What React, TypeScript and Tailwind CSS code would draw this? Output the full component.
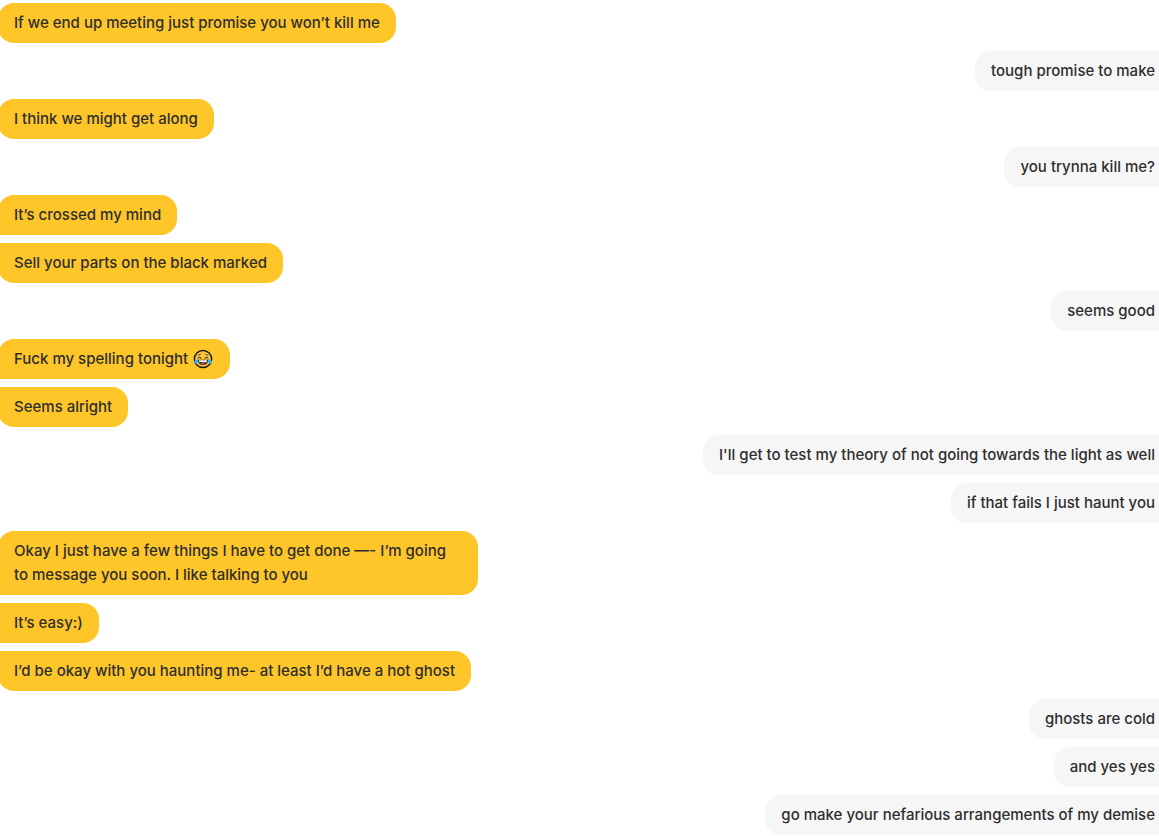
import clsx from 'clsx';

type Message = {
  text: string;
  mine?: boolean;
  emoji?: boolean;
};

const messages: Message[] = [
  { text: 'If we end up meeting just promise you won’t kill me' },
  { text: 'tough promise to make', mine: true },
  { text: 'I think we might get along' },
  { text: 'you trynna kill me?', mine: true },
  { text: 'It’s crossed my mind' },
  { text: 'Sell your parts on the black marked' },
  { text: 'seems good', mine: true },
  { text: 'Fuck my spelling tonight ', emoji: true },
  { text: 'Seems alright' },
  { text: "I'll get to test my theory of not going towards the light as well", mine: true },
  { text: 'if that fails I just haunt you', mine: true },
  { text: 'Okay I just have a few things I have to get done —- I’m going to message you soon. I like talking to you' },
  { text: 'It’s easy:)' },
  { text: 'I’d be okay with you haunting me- at least I’d have a hot ghost' },
  { text: 'ghosts are cold', mine: true },
  { text: 'and yes yes', mine: true },
  { text: 'go make your nefarious arrangements of my demise', mine: true },
];

function JoyEmoji() {
  return (
    <svg aria-label="😂" className="mx-px inline-block size-5 align-[-5px]" role="img" viewBox="0 0 20 20">
      <circle cx="10" cy="10" fill="#ffc83d" r="8.6" stroke="#1a1a1a" strokeWidth="1.5" />
      <path d="M5 6.4 7.6 5.2M15 6.4 12.4 5.2" fill="none" stroke="#1a1a1a" strokeLinecap="round" strokeWidth="0.7" />
      <path d="M4.8 9q1.6-1.7 3.4 0M11.8 9q1.8-1.7 3.4 0" fill="none" stroke="#1a1a1a" strokeLinecap="round" />
      <path d="M4.8 10.8h10.4q-.5 5.4-5.2 5.4t-5.2-5.4z" fill="#1a1a1a" />
      <path d="M5.8 11.2h8.4l-.5 2H6.3z" fill="#fff" />
      <path d="M7.2 15q2.8-2 5.6 0-2.8 1.6-5.6 0z" fill="#e8505b" />
      <path d="M5 10.6c-2.4.2-4 1-4 2.6 0 2.4 3.4 2 3.7 0zM15 10.6c2.4.2 4 1 4 2.6 0 2.4-3.4 2-3.7 0z" fill="#35b5e9" />
    </svg>
  );
}

export default function App() {
  return (
    <main className="overflow-hidden bg-white">
      <ul className="-ml-0.5 -mr-3 flex flex-col gap-2 py-[3px] font-['Inter','Liberation_Sans',sans-serif] text-[15px]/6 font-[450] text-[#2e2e2e]">
        {messages.map(({ text, mine, emoji }, i) => {
          const prev = messages[i - 1];
          const next = messages[i + 1];

          return (
            <li
              className={clsx(
                'max-w-[480px] rounded-2xl px-4 py-2',
                mine ? 'self-end bg-[#f6f6f6]' : 'self-start bg-[#ffc629]',
                // consecutive messages from the same person get tighter corners
                !mine && prev && !prev.mine && 'rounded-tl-sm',
                !mine && next && !next.mine && 'rounded-bl-sm',
              )}
              key={text}
            >
              {text}
              {emoji && <JoyEmoji />}
            </li>
          );
        })}
      </ul>
    </main>
  );
}
